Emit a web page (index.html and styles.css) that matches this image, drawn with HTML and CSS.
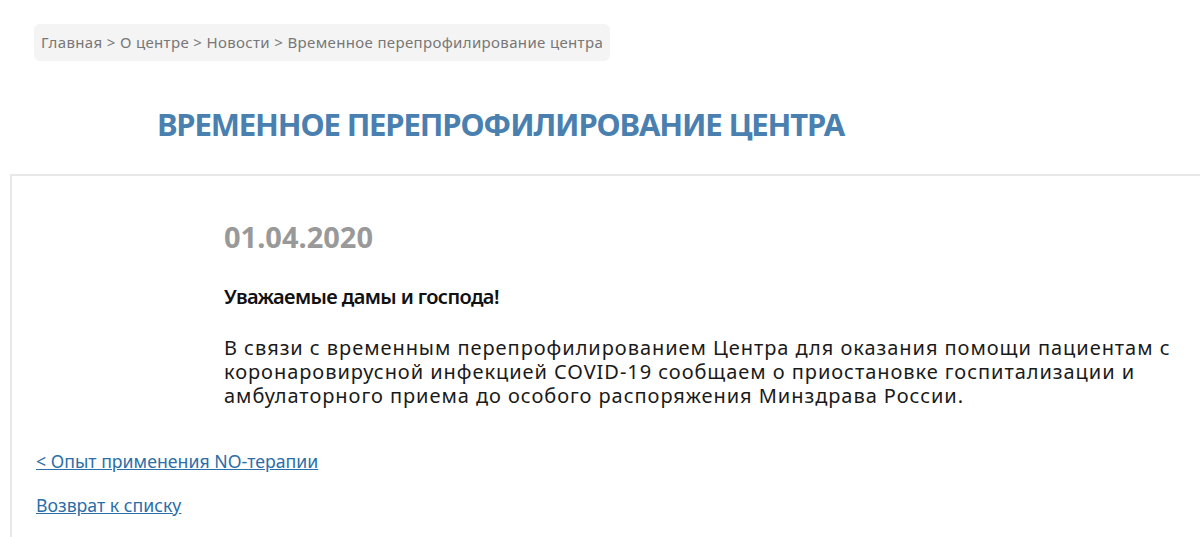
FILE: index.html
```html
<!DOCTYPE html>
<html lang="ru">
<head>
    <meta charset="UTF-8">
    <meta name="viewport" content="width=device-width, initial-scale=1.0">
    <title>Временное перепрофилирование центра</title>
    <link rel="stylesheet" href="styles.css">
</head>
<body>
    <div class="breadcrumbs">
        <a href="#">Главная</a> &gt; <a href="#">О центре</a> &gt; <a href="#">Новости</a> &gt; <span>Временное перепрофилирование центра</span>
    </div>

    <h1 class="page-title">Временное перепрофилирование центра</h1>

    <div class="news-box">
        <div class="news-detail">
            <div class="news-date">01.04.2020</div>
            <p class="news-lead">Уважаемые дамы и господа!</p>
            <p class="news-text">В связи с временным перепрофилированием Центра для оказания помощи пациентам с коронаровирусной инфекцией COVID-19 сообщаем о приостановке госпитализации и амбулаторного приема до особого распоряжения Минздрава России.</p>
        </div>

        <!-- навигация -->
        <a class="nav-link" href="#">&lt; Опыт применения NO-терапии</a>
        <a class="nav-link" href="#">Возврат к списку</a>
    </div>
</body>
</html>
```

FILE: styles.css
```css
body {
    font-family: 'Noto Sans', 'Open Sans', sans-serif;
    background-color: #fff;
    color: #111;
    margin: 0;
    overflow: hidden;
}
.breadcrumbs {
    display: inline-block;
    margin: 24px 0 0 34px;
    padding: 8px 7px;
    background-color: #f4f4f4;
    border-radius: 6px;
    font-size: 15px;
    line-height: 21px;
    letter-spacing: 0.35px;
    color: #777;
}
.breadcrumbs a {
    color: #777;
    text-decoration: none;
}
.page-title {
    margin: 43px 0 0 157px;
    font-size: 31px;
    line-height: 40px;
    letter-spacing: -1.15px;
    font-weight: bold;
    text-transform: uppercase;
    color: #4a80b0;
}
.news-box {
    margin: 30px 0 0 10px;
    padding: 43px 0 40px 24px;
    border-top: 2px solid #e8e8e8;
    border-left: 2px solid #e8e8e8;
    min-height: 400px;
}
.news-detail {
    padding-left: 188px;
    max-width: 972px;
}
.news-date {
    font-size: 29px;
    font-weight: bold;
    color: #999;
    line-height: 36px;
}
.news-lead {
    margin: 30px 0 0;
    font-size: 20px;
    font-weight: 600;
    letter-spacing: -0.6px;
    line-height: 24px;
}
.news-text {
    margin: 27px 0 0;
    font-size: 20px;
    line-height: 24px;
    letter-spacing: 0.95px;
    color: #1a1a1a;
}
.nav-link {
    display: table;
    margin-top: 20px;
    font-size: 17.7px;
    color: #2b6ea8;
}
.news-detail + .nav-link {
    margin-top: 41px;
}
```
